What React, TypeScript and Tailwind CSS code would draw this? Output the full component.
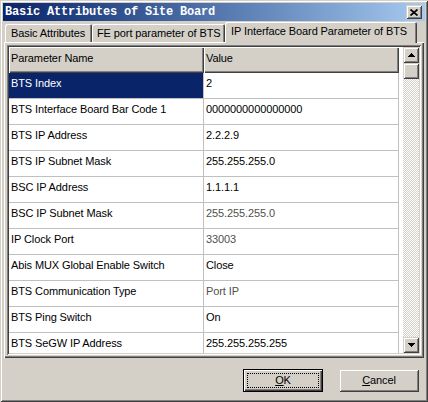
import React from 'react';

const raised =
  'shadow-[inset_1px_1px_0_#d4d0c8,inset_-1px_-1px_0_#404040,inset_2px_2px_0_#fff,inset_-2px_-2px_0_#808080]';
const sunken =
  'shadow-[inset_1px_1px_0_#808080,inset_-1px_-1px_0_#fff,inset_2px_2px_0_#404040,inset_-2px_-2px_0_#d4d0c8]';
const headerCell =
  'shadow-[inset_1px_1px_0_#fff,inset_-1px_-1px_0_#404040,inset_-2px_-2px_0_#808080]';
const tabEdge =
  'shadow-[inset_1px_1px_0_#fff,inset_-1px_0_0_#404040,inset_-2px_0_0_#808080]';

const rows: { name: string; value: string; dim?: boolean }[] = [
  { name: 'BTS Index', value: '2' },
  { name: 'BTS Interface Board Bar Code 1', value: '0000000000000000' },
  { name: 'BTS IP Address', value: '2.2.2.9' },
  { name: 'BTS IP Subnet Mask', value: '255.255.255.0' },
  { name: 'BSC IP Address', value: '1.1.1.1' },
  { name: 'BSC IP Subnet Mask', value: '255.255.255.0', dim: true },
  { name: 'IP Clock Port', value: '33003', dim: true },
  { name: 'Abis MUX Global Enable Switch', value: 'Close' },
  { name: 'BTS Communication Type', value: 'Port IP', dim: true },
  { name: 'BTS Ping Switch', value: 'On' },
  { name: 'BTS SeGW IP Address', value: '255.255.255.255' },
];

function Arrow({ up }: { up?: boolean }) {
  return (
    <svg width="7" height="4" viewBox="0 0 7 4" shapeRendering="crispEdges">
      <polygon points={up ? '0,4 3.5,0 7,4' : '0,0 7,0 3.5,4'} fill="#000" />
    </svg>
  );
}

export default function App() {
  return (
    <div
      className={`w-[428px] h-[402px] bg-[#d4d0c8] p-[3px] flex flex-col text-[11px] tracking-[-0.1px] text-black ${raised}`}
      style={{ fontFamily: '"Liberation Sans", Arial, sans-serif' }}
    >
      {/* Title bar */}
      <div className="h-[18px] shrink-0 flex items-center justify-between bg-gradient-to-r from-[#0a246a] to-[#a6caf0] pl-[2px] pr-[3px]">
        <span
          className="text-white font-bold text-[12px] tracking-[-0.2px] leading-[18px] whitespace-nowrap"
          style={{ fontFamily: '"Liberation Mono", "Courier New", monospace' }}
        >
          Basic Attributes of Site Board
        </span>
        <button className={`w-[16px] h-[14px] bg-[#d4d0c8] flex items-center justify-center ${raised}`}>
          <svg width="8" height="7" viewBox="0 0 8 7">
            <path d="M0.5 0.5 L7.5 6.5 M7.5 0.5 L0.5 6.5" stroke="#000" strokeWidth="1.7" />
          </svg>
        </button>
      </div>

      {/* Tabs */}
      <div className="h-[21px] shrink-0 flex items-end pl-[2px]">
        <div className={`w-[87px] h-[18px] pl-[6px] pt-[1px] leading-[17px] whitespace-nowrap overflow-hidden rounded-t-[2px] ${tabEdge}`}>
          Basic Attributes
        </div>
        <div className={`w-[133px] h-[18px] pl-[5px] pt-[1px] leading-[17px] whitespace-nowrap overflow-hidden rounded-t-[2px] ${tabEdge}`}>
          FE port parameter of BTS
        </div>
        <div className={`relative z-10 w-[192px] h-[21px] mb-[-1px] bg-[#d4d0c8] pl-[6px] pt-[1px] leading-[17px] whitespace-nowrap overflow-hidden rounded-t-[2px] ${tabEdge}`}>
          IP Interface Board Parameter of BTS
        </div>
      </div>

      {/* Tab panel */}
      <div className="h-[316px] shrink-0 mx-[1px] p-[3px] shadow-[inset_1px_1px_0_#fff,inset_-1px_-1px_0_#404040,inset_-2px_-2px_0_#808080]">
        <div className={`h-full p-[2px] bg-white flex ${sunken}`}>
          <div className="w-[394px] flex flex-col bg-white overflow-hidden">
            <div className="flex shrink-0">
              <div className={`w-[195px] h-[26px] bg-[#d4d0c8] pl-[2px] pt-[1px] leading-[20px] ${headerCell}`}>
                Parameter Name
              </div>
              <div className={`w-[195px] h-[26px] bg-[#d4d0c8] pl-[2px] pt-[1px] leading-[20px] ${headerCell}`}>
                Value
              </div>
            </div>
            {rows.map((r, i) => (
              <div key={r.name} className="flex shrink-0">
                <div
                  className={`w-[195px] h-[26px] shrink-0 border-r border-b border-[#c0c0c0] pl-[2px] leading-[20px] whitespace-nowrap ${
                    i === 0 ? 'bg-[#0a246a] text-white' : ''
                  }`}
                >
                  {r.name}
                </div>
                <div
                  className={`w-[195px] h-[26px] shrink-0 border-r border-b border-[#c0c0c0] pl-[2px] leading-[20px] whitespace-nowrap ${
                    r.dim ? 'text-[#505050]' : ''
                  }`}
                >
                  {r.value}
                </div>
              </div>
            ))}
          </div>
          {/* Scrollbar */}
          <div className="w-[16px] flex flex-col">
            <div className={`h-[16px] shrink-0 bg-[#d4d0c8] flex items-center justify-center ${raised}`}>
              <Arrow up />
            </div>
            <div className={`h-[16px] shrink-0 bg-[#d4d0c8] ${raised}`} />
            <div className="flex-1 bg-[repeating-conic-gradient(#d4d0c8_0_25%,#ffffff_0_50%)] bg-[length:2px_2px]" />
            <div className={`h-[16px] shrink-0 bg-[#d4d0c8] flex items-center justify-center ${raised}`}>
              <Arrow />
            </div>
          </div>
        </div>
      </div>

      {/* Buttons */}
      <div className="flex-1 flex justify-end items-start pt-[11px] pr-[6px] gap-[16px]">
        <button className="w-[80px] h-[23px] border border-black bg-[#d4d0c8] p-0">
          <div className="h-full shadow-[inset_1px_1px_0_#fff,inset_-1px_-1px_0_#404040,inset_-2px_-2px_0_#808080] p-[3px]">
            <div className="h-full border border-dotted border-black flex items-center justify-center leading-none">
              <span>
                <span className="underline">O</span>K
              </span>
            </div>
          </div>
        </button>
        <button className={`w-[80px] h-[23px] bg-[#d4d0c8] flex items-center justify-center ${raised}`}>
          <span>
            <span className="underline">C</span>ancel
          </span>
        </button>
      </div>
    </div>
  );
}
